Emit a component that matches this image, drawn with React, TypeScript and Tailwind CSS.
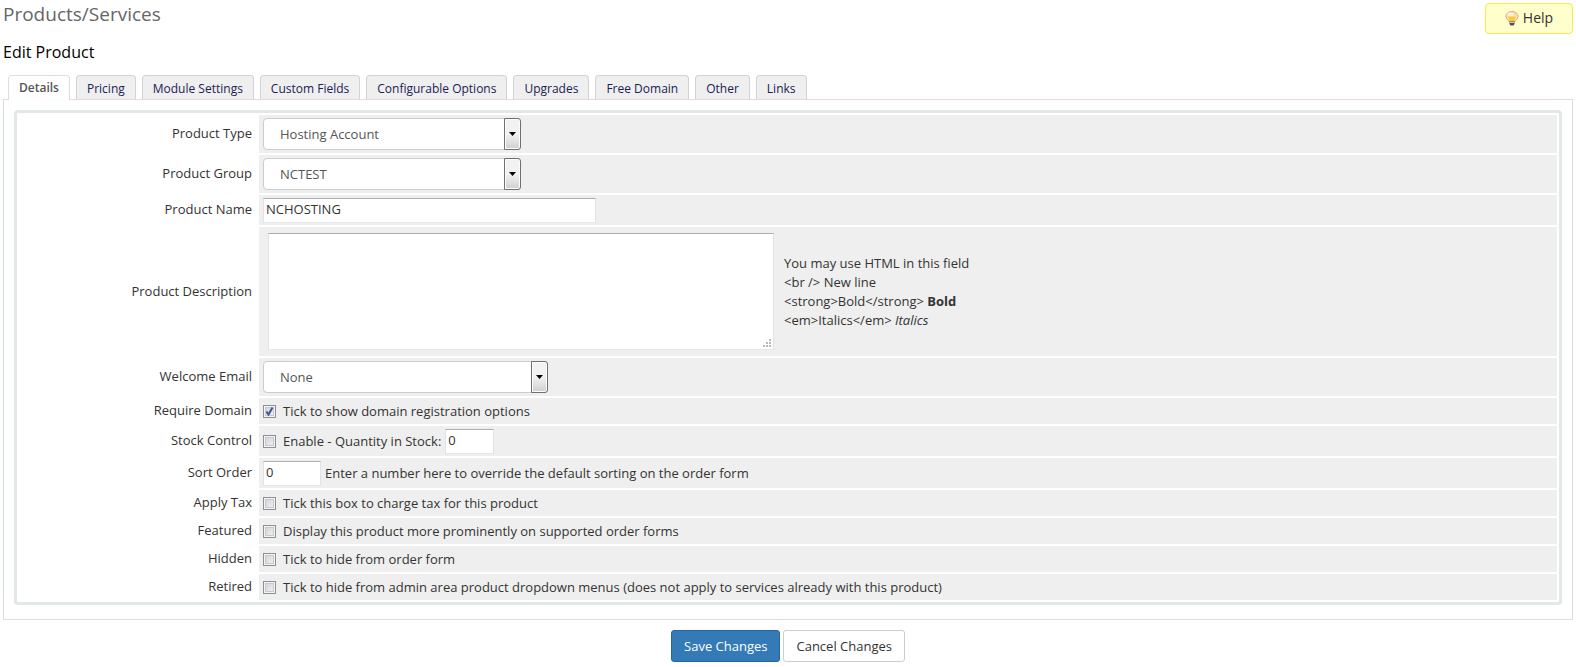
import { useState, type ReactNode } from 'react';

const TABS = [
    'Details',
    'Pricing',
    'Module Settings',
    'Custom Fields',
    'Configurable Options',
    'Upgrades',
    'Free Domain',
    'Other',
    'Links',
];

const inputClass =
    'h-[25px] border border-t-[#abadb3] border-x-[#e2e3ea] border-b-[#e3e9ef] bg-white px-[2px] pb-[2px] text-[#333] outline-none';

interface FieldRowProps {
    label: string;
    htmlFor: string;
    height: string;
    children: ReactNode;
}

const FieldRow = ({ label, htmlFor, height, children }: FieldRowProps) => (
    <tr>
        <th scope="row" className="w-[238px] pr-[5px] pb-px text-right align-middle font-normal">
            <label htmlFor={htmlFor}>{label}</label>
        </th>
        <td className={`bg-[#efefef] px-1 align-middle ${height}`}>{children}</td>
    </tr>
);

interface DropdownProps {
    id: string;
    width: string;
    options: string[];
}

const Dropdown = ({ id, width, options }: DropdownProps) => (
    <div className={`relative h-8 ${width}`}>
        <select
            id={id}
            defaultValue={options[0]}
            className="block h-8 w-full appearance-none rounded border border-[#ccc] bg-white pr-6 pl-4 text-[#555] outline-none"
        >
            {options.map((option) => (
                <option key={option}>{option}</option>
            ))}
        </select>
        <span className="pointer-events-none absolute inset-y-0 right-0 flex w-[17px] items-center justify-center rounded-r-[3px] border border-[#707070] bg-linear-to-b from-[#f2f2f2] from-50% to-[#cfcfcf] shadow-[inset_0_0_0_1px_#fcfcfc]">
            <svg width="7" height="4" viewBox="0 0 7 4" aria-hidden="true">
                <path d="M0 0h7L3.5 4z" fill="#000" />
            </svg>
        </span>
    </div>
);

interface CheckboxProps {
    id: string;
    label: string;
    checked: boolean;
    onChange: (checked: boolean) => void;
}

const Checkbox = ({ id, label, checked, onChange }: CheckboxProps) => (
    <div className="flex items-center gap-[7px]">
        <span className="relative size-[13px]">
            <input
                id={id}
                type="checkbox"
                aria-label={label}
                checked={checked}
                onChange={(e) => onChange(e.target.checked)}
                className="block size-[13px] appearance-none border border-[#8e8f8f] bg-linear-to-br from-[#cbcfd5] to-[#f6f6f6] shadow-[inset_0_0_0_1px_#f4f4f4,inset_0_0_0_2px_#c5c9ce]"
            />
            {checked && (
                <svg className="pointer-events-none absolute inset-0" width="13" height="13" viewBox="0 0 13 13" aria-hidden="true">
                    <path d="M3.500 6.500 5.500 9.500 9.500 2.500" fill="none" stroke="#40569c" strokeWidth="2" />
                </svg>
            )}
        </span>
        <label htmlFor={id}>{label}</label>
    </div>
);

const BulbIcon = () => (
    <svg width="14" height="16" viewBox="0 0 14 16" aria-hidden="true">
        <path
            d="M7 1.500c3.600 0 6 2.100 6 4.900 0 2.100-1.300 3.200-2.400 4.100-.5.400-.6.900-.8 1.500H4.200c-.2-.6-.3-1.100-.8-1.500C2.300 9.600 1 8.500 1 6.400c0-2.800 2.400-4.900 6-4.900z"
            fill="#fbdcae"
            stroke="#e9a872"
        />
        <ellipse cx="5.500" cy="4.500" rx="3" ry="2" fill="#fff6e8" />
        <path d="M3.500 6.500h7L9.500 11.500h-5z" fill="#f6cb36" />
        <path d="M4.500 11.500h5v2.500L8.500 15.500h-3L4.500 14z" fill="#505050" />
        <path d="M4.500 12.500h5" stroke="#c9c9c9" />
    </svg>
);

// dotted grip in the corner of the description box
const ResizeGrip = () => (
    <svg className="pointer-events-none absolute right-[3px] bottom-[3px]" width="8" height="8" viewBox="0 0 8 8" aria-hidden="true">
        <path d="M6 0h2v2H6zM6 3h2v2H6zM6 6h2v2H6zM3 3h2v2H3zM3 6h2v2H3zM0 6h2v2H0z" fill="#b8b8b8" />
    </svg>
);

export default function App() {
    const [activeTab, setActiveTab] = useState('Details');
    const [flags, setFlags] = useState<Record<string, boolean>>({ requireDomain: true });

    const flagProps = (id: string) => ({
        id,
        checked: !!flags[id],
        onChange: (checked: boolean) => setFlags((prev) => ({ ...prev, [id]: checked })),
    });

    return (
        <main className="px-[3px] pt-[3px] font-['Open_Sans',sans-serif] text-[13px] leading-[19px] text-[#333]">
            <header className="flex items-start justify-between">
                <h1 className="text-[19px] leading-[22px] text-[#666]">Products/Services</h1>
                <button
                    type="button"
                    className="flex h-[31px] w-[88px] items-center justify-center gap-1 rounded border border-[#fbe84b] bg-[#ffffcc] pb-px text-sm"
                >
                    <BulbIcon />
                    Help
                </button>
            </header>

            <h2 className="mt-[6px] text-base leading-6 text-black">Edit Product</h2>

            <nav className="mt-[11px] flex gap-[6px] pl-[5px]">
                {TABS.map((tab) => (
                    <button
                        key={tab}
                        type="button"
                        onClick={() => setActiveTab(tab)}
                        className={
                            tab === activeTab
                                ? 'relative z-10 -mb-px h-[25px] rounded-t border border-b-0 border-[#ddd] bg-white px-[10px] text-xs font-semibold text-[#555]'
                                : 'h-6 rounded-t border border-b-0 border-[#d3d3d3] bg-[#efefef] px-[10px] pt-[2px] text-xs text-[#1a2155]'
                        }
                    >
                        {tab}
                    </button>
                ))}
            </nav>

            <section className="border border-[#ddd] px-[10px] pt-[10px] pb-[14px]">
                <div className="rounded border-[3px] border-[#e2e7e9]">
                    <table className="w-full border-separate border-spacing-[2px]">
                        <tbody>
                            <FieldRow label="Product Type" htmlFor="productType" height="h-[38px]">
                                <Dropdown id="productType" width="w-[258px]" options={['Hosting Account']} />
                            </FieldRow>
                            <FieldRow label="Product Group" htmlFor="productGroup" height="h-[38px]">
                                <Dropdown id="productGroup" width="w-[258px]" options={['NCTEST']} />
                            </FieldRow>
                            <FieldRow label="Product Name" htmlFor="productName" height="h-[30px]">
                                <input id="productName" defaultValue="NCHOSTING" className={`block w-[333px] ${inputClass}`} />
                            </FieldRow>
                            <FieldRow label="Product Description" htmlFor="description" height="h-[129px]">
                                <div className="flex items-center gap-[10px] pl-[5px]">
                                    <div className="relative">
                                        <textarea
                                            id="description"
                                            className="block h-[117px] w-[506px] resize-none border border-t-[#abadb3] border-x-[#e2e3ea] border-b-[#e3e9ef] bg-white p-1 outline-none"
                                        />
                                        <ResizeGrip />
                                    </div>
                                    <p>
                                        You may use HTML in this field
                                        <br />
                                        {'<br /> New line'}
                                        <br />
                                        {'<strong>Bold</strong> '}
                                        <strong>Bold</strong>
                                        <br />
                                        {'<em>Italics</em> '}
                                        <em>Italics</em>
                                    </p>
                                </div>
                            </FieldRow>
                            <FieldRow label="Welcome Email" htmlFor="welcomeEmail" height="h-[38px]">
                                <Dropdown id="welcomeEmail" width="w-[285px]" options={['None']} />
                            </FieldRow>
                            <FieldRow label="Require Domain" htmlFor="requireDomain" height="h-[26px]">
                                <Checkbox label="Tick to show domain registration options" {...flagProps('requireDomain')} />
                            </FieldRow>
                            <FieldRow label="Stock Control" htmlFor="stockControl" height="h-[30px]">
                                <div className="flex items-center gap-1">
                                    <Checkbox label="Enable - Quantity in Stock:" {...flagProps('stockControl')} />
                                    <input aria-label="Quantity in Stock" defaultValue="0" className={`w-[49px] ${inputClass}`} />
                                </div>
                            </FieldRow>
                            <FieldRow label="Sort Order" htmlFor="sortOrder" height="h-[30px]">
                                <div className="flex items-center gap-1">
                                    <input id="sortOrder" defaultValue="0" className={`w-[58px] ${inputClass}`} />
                                    <span>Enter a number here to override the default sorting on the order form</span>
                                </div>
                            </FieldRow>
                            <FieldRow label="Apply Tax" htmlFor="applyTax" height="h-[26px]">
                                <Checkbox label="Tick this box to charge tax for this product" {...flagProps('applyTax')} />
                            </FieldRow>
                            <FieldRow label="Featured" htmlFor="featured" height="h-[26px]">
                                <Checkbox label="Display this product more prominently on supported order forms" {...flagProps('featured')} />
                            </FieldRow>
                            <FieldRow label="Hidden" htmlFor="hidden" height="h-[26px]">
                                <Checkbox label="Tick to hide from order form" {...flagProps('hidden')} />
                            </FieldRow>
                            <FieldRow label="Retired" htmlFor="retired" height="h-[26px]">
                                <Checkbox
                                    label="Tick to hide from admin area product dropdown menus (does not apply to services already with this product)"
                                    {...flagProps('retired')}
                                />
                            </FieldRow>
                        </tbody>
                    </table>
                </div>
            </section>

            <div className="mt-[10px] flex justify-center gap-[3px]">
                <button type="submit" className="h-8 rounded-[3px] border border-[#2566a0] bg-[#337ab7] px-3 text-white">
                    Save Changes
                </button>
                <button type="button" className="h-8 rounded-[3px] border border-[#ccc] bg-white px-3">
                    Cancel Changes
                </button>
            </div>
        </main>
    );
}
